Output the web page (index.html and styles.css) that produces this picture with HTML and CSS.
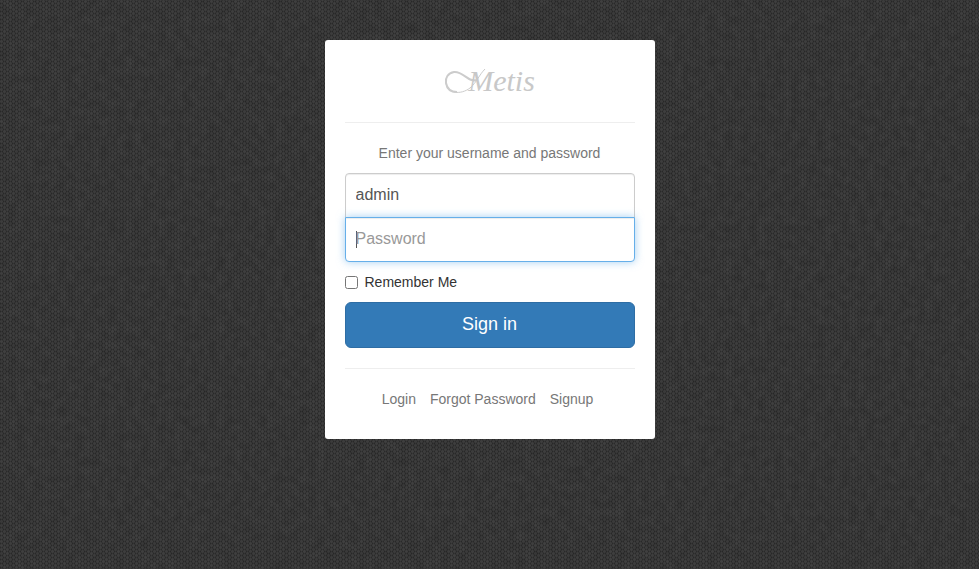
FILE: index.html
```html
<!DOCTYPE html>
<html lang="en">
<head>
<meta charset="utf-8">
<title>Login</title>
<link rel="stylesheet" href="styles.css">
</head>
<body>
<svg class="backdrop" aria-hidden="true" width="100%" height="100%">
  <defs>
    <pattern id="weave" width="6" height="4" patternUnits="userSpaceOnUse">
      <rect width="6" height="4" fill="#383838"/>
      <path d="M0 1h3v1H0zM1 0h1v3H1zM3 3h3v1H3zM4 2h1v2H4zM4 0h1v1H4z" fill="#414141"/>
      <path d="M0 3h1v1H0zM2 3h1v1H2zM3 1h1v1H3zM5 1h1v1H5z" fill="#2c2c2c"/>
    </pattern>
    <filter id="grain" x="0" y="0" width="100%" height="100%">
      <feTurbulence type="fractalNoise" baseFrequency="0.12" numOctaves="4" seed="3"/>
      <feColorMatrix values="0 0 0 0 0  0 0 0 0 0  0 0 0 0 0  1 0 0 0 -0.2"/>
    </filter>
  </defs>
  <rect width="100%" height="100%" fill="url(#weave)"/>
  <rect width="100%" height="100%" filter="url(#grain)" opacity="0.22"/>
</svg>
<main class="card">
  <div class="brand">
    <svg class="swash" width="42" height="36" viewBox="0 0 42 36" aria-hidden="true">
      <path class="thin" d="M2 20C3 31 17 32 26 25C33 19 35 12 41 6"/>
      <path class="thick" d="M32 17C25 20 19 8 10 9C4 10 1 15 2 20C3 26 7 29 13 29"/>
    </svg>
    <span class="wordmark">Metis</span>
  </div>
  <hr>
  <form>
    <p class="hint">Enter your username and password</p>
    <input class="field field-top" type="text" value="admin" placeholder="Username" aria-label="Username">
    <input class="field field-bottom" type="password" placeholder="Password" aria-label="Password" autofocus>
    <label class="remember"><input type="checkbox"> Remember Me</label>
    <button class="submit" type="button">Sign in</button>
  </form>
  <hr>
  <nav class="links">
    <a href="#login">Login</a>
    <a href="#forgot">Forgot Password</a>
    <a href="#signup">Signup</a>
  </nav>
</main>
</body>
</html>
```
FILE: styles.css
```css
* { box-sizing: border-box; }
body {
  margin: 0;
  padding: 40px 16px;
  background: #373737;
  color: #333;
  font: 14px/20px "Liberation Sans", Arial, sans-serif;
}
.backdrop {
  position: fixed;
  inset: 0;
  z-index: -1;
}
.card {
  max-width: 330px;
  margin: 0 auto;
  padding: 20px;
  background: #fff;
  border-radius: 3px;
}
.brand {
  display: flex;
  justify-content: center;
  height: 42px;
  align-items: center;
}
.swash {
  margin-right: -18px;
  fill: none;
  stroke: #ccc;
}
.swash .thin { stroke-width: 1; }
.swash .thick { stroke-width: 2; }
.wordmark {
  color: #c8c8c8;
  font: italic 30px/42px "Liberation Serif", "Times New Roman", serif;
}
hr {
  margin: 20px 0;
  border: 0;
  border-top: 1px solid #eee;
}
.hint {
  margin: 0 0 10px;
  color: #777;
  text-align: center;
}
.field {
  display: block;
  position: relative;
  width: 100%;
  height: 45px;
  padding: 9px 10px 11px;
  border: 1px solid #ccc;
  background: #fff;
  color: #555;
  font: 16px/22px "Liberation Sans", Arial, sans-serif;
  box-shadow: inset 0 1px 1px rgba(0, 0, 0, .075);
}
.field::placeholder { color: #999; }
.field:focus {
  z-index: 1;
  outline: 0;
  border-color: #66afe9;
  box-shadow: inset 0 1px 1px rgba(0, 0, 0, .075), 0 0 8px rgba(102, 175, 233, .6);
}
/* Steady caret while the focused field is empty */
.field:focus:placeholder-shown {
  caret-color: transparent;
  background: linear-gradient(#555, #555) 10px 13px / 1px 17px no-repeat #fff;
}
.field-top { border-radius: 4px 4px 0 0; }
.field-bottom {
  margin-top: -1px;
  margin-bottom: 10px;
  border-radius: 0 0 4px 4px;
}
.remember {
  display: flex;
  align-items: center;
  gap: 7px;
  margin-bottom: 10px;
}
.remember input {
  width: 13px;
  height: 13px;
  margin: 0;
}
.submit {
  display: block;
  width: 100%;
  height: 46px;
  padding: 9px 16px 11px;
  border: 1px solid #2e6da4;
  border-radius: 6px;
  background: #337ab7;
  color: #fff;
  font: 18px/24px "Liberation Sans", Arial, sans-serif;
}
.links {
  display: flex;
  justify-content: center;
  gap: 14px;
  padding: 0 4px 10px 0;
}
.links a {
  color: #777;
  text-decoration: none;
}
```
